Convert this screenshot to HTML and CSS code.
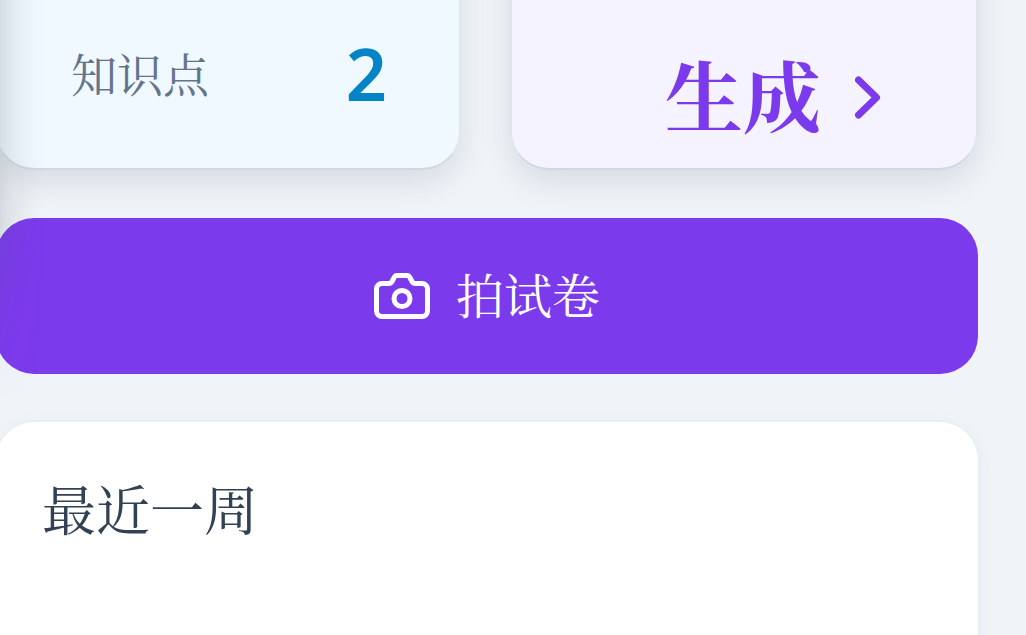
FILE: index.html
```html
<!DOCTYPE html>
<html lang="zh">
<head>
<meta charset="utf-8">
<title>生成</title>
<link rel="stylesheet" href="styles.css">
</head>
<body>
<div class="edge-shade"></div>
<main class="page">
  <section class="stats">
    <div class="stat stat-blue">
      <span class="stat-label">知识点</span>
      <span class="stat-value">2</span>
    </div>
    <div class="stat stat-violet">
      <span class="gen-label">生成</span>
      <svg class="chevron" viewBox="0 0 26 44" aria-hidden="true"><path d="M3.500 4 21.500 21.500 3.500 39" /></svg>
    </div>
  </section>
  <button class="shoot" type="button">
    <svg class="camera" viewBox="0 0 56 46" aria-hidden="true">
      <path d="M8 10.500h6.500c1.500 0 2.800-.8 3.500-2l1.600-3C20.300 3.500 21.500 2.500 23 2.500h10c1.500 0 2.700 1 3.400 3l1.600 3c.7 1.200 2 2 3.500 2H48c3 0 5.500 2.500 5.500 5.500v22c0 3-2.500 5.500-5.500 5.500H8c-3 0-5.500-2.500-5.500-5.500V16c0-3 2.500-5.500 5.500-5.500Z"/>
      <circle cx="28" cy="25.500" r="8"/>
    </svg>
    <span>拍试卷</span>
  </button>
  <section class="recent">
    <h2>最近一周</h2>
  </section>
</main>
</body>
</html>
```
FILE: styles.css
```css
* { box-sizing: border-box; }
html, body { margin: 0; height: 100%; }
body {
  background: #f0f4f8;
  overflow: hidden;
  font-family: KaiTi, "AR PL UKai CN", "Noto Serif CJK SC", "Noto Sans CJK SC", serif;
}
.edge-shade {
  position: fixed;
  left: 0;
  top: 0;
  width: 44px;
  height: 400px;
  z-index: 2;
  pointer-events: none;
  background: linear-gradient(90deg, rgba(70, 85, 95, .16), rgba(70, 85, 95, .08) 30%, rgba(70, 85, 95, .03) 65%, rgba(70, 85, 95, 0));
  -webkit-mask-image: linear-gradient(180deg, #000 55%, rgba(0, 0, 0, .35) 75%, transparent);
  mask-image: linear-gradient(180deg, #000 55%, rgba(0, 0, 0, .35) 75%, transparent);
}
.page {
  width: 982px;
  height: 900px;
  margin: -80px 0 0 -4px;
}
.stats {
  display: grid;
  grid-template-columns: 464px 466px;
  gap: 51px;
}
.stat {
  height: 250px;
  margin-bottom: 0;
  border-radius: 38px;
  display: flex;
  border: 1px solid #e0e5eb;
  border-bottom: 2px solid #d2d8df;
  box-shadow: 0 12px 30px rgba(70, 90, 105, .15);
}
.stat-blue {
  background: #f0f9ff;
  padding: 119px 72px 0 74px;
  justify-content: space-between;
  align-items: flex-start;
}
.stat-violet {
  background: #f5f3ff;
  padding: 122px 0 0 153px;
  align-items: flex-start;
  gap: 34px;
}
.stat-label {
  font-size: 46px;
  line-height: 64px;
  color: #64748b;
}
.stat-value {
  font-family: "Noto Sans", sans-serif;
  font-size: 72px;
  line-height: 90px;
  font-weight: 600;
  color: #0284c7;
  margin-top: -12px;
}
.gen-label {
  font-size: 78px;
  line-height: 100px;
  font-weight: 700;
  color: #7c3aed;
}
.chevron {
  width: 26px;
  height: 44px;
  margin-top: 33px;
  fill: none;
  stroke: #7c3aed;
  stroke-width: 7;
  stroke-linecap: round;
  stroke-linejoin: round;
}
.shoot {
  display: flex;
  align-items: center;
  justify-content: center;
  gap: 26px;
  width: 982px;
  height: 156px;
  margin-top: 48px;
  padding: 0;
  border: 0;
  border-radius: 38px;
  background: #7c3aed;
  color: #fff;
  font: inherit;
  font-size: 48px;
}
.shoot span {
  margin-top: -6px;
}
.camera {
  width: 56px;
  height: 46px;
  fill: none;
  stroke: #fff;
  stroke-width: 5;
  stroke-linejoin: round;
}
.recent {
  height: 400px;
  margin-top: 48px;
  padding: 54px 46px;
  background: #fff;
  border-radius: 38px;
  box-shadow: 0 0 0 1px #e9edf1, 0 4px 16px rgba(70, 90, 110, .08);
}
.recent h2 {
  margin: 0;
  font-size: 54px;
  line-height: 64px;
  font-weight: 400;
  color: #334155;
}
```
